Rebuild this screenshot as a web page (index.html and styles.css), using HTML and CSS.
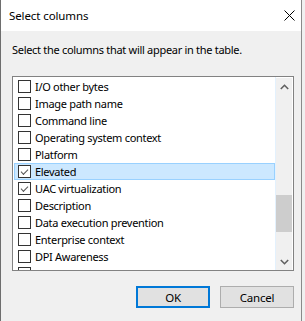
FILE: index.html
```html
<!DOCTYPE html>
<html lang="en">
<head>
    <meta charset="UTF-8">
    <title>Select columns</title>
    <link rel="stylesheet" href="styles.css">
</head>
<body>
    <div class="window">
        <div class="titlebar">
            <span class="title">Select columns</span>
            <svg class="close" width="11" height="11" viewBox="0 0 11 11">
                <path d="M0.5 0.5L10.5 10.5M10.5 0.5L0.5 10.5" stroke="#000" stroke-width="1" fill="none"/>
            </svg>
        </div>
        <div class="content">
            <p class="prompt">Select the columns that will appear in the table.</p>
            <div class="list">
                <ul class="items">
                    <li class="item"><span class="check"></span>I/O other bytes</li>
                    <li class="item"><span class="check"></span>Image path name</li>
                    <li class="item"><span class="check"></span>Command line</li>
                    <li class="item"><span class="check"></span>Operating system context</li>
                    <li class="item"><span class="check"></span>Platform</li>
                    <li class="item selected"><span class="check checked"></span>Elevated</li>
                    <li class="item"><span class="check checked"></span>UAC virtualization</li>
                    <li class="item"><span class="check"></span>Description</li>
                    <li class="item"><span class="check"></span>Data execution prevention</li>
                    <li class="item"><span class="check"></span>Enterprise context</li>
                    <li class="item"><span class="check"></span>DPI Awareness</li>
                    <li class="item"><span class="check"></span></li>
                </ul>
                <div class="scrollbar">
                    <span class="arrow">
                        <svg width="9" height="6" viewBox="0 0 9 6"><path d="M0.8 5L4.5 1.3L8.2 5" stroke="#606060" stroke-width="1.6" fill="none"/></svg>
                    </span>
                    <div class="track"><div class="thumb"></div></div>
                    <span class="arrow">
                        <svg width="9" height="6" viewBox="0 0 9 6"><path d="M0.8 1L4.5 4.7L8.2 1" stroke="#606060" stroke-width="1.6" fill="none"/></svg>
                    </span>
                </div>
            </div>
            <div class="buttons">
                <button class="btn btn-default">OK</button>
                <button class="btn">Cancel</button>
            </div>
        </div>
    </div>
</body>
</html>
```

FILE: styles.css
```css
body {
    margin: 0;
    background: #f0f0f0;
    font-family: 'Noto Sans', 'Open Sans', sans-serif;
    font-size: 11px;
    letter-spacing: -0.3px;
    color: #000;
}
.window {
    width: 302px;
    height: 321px;
    box-sizing: border-box;
    border-left: 1px solid #6e6e6e;
    border-right: 1px solid #8a8a8a;
    background: #f0f0f0;
    overflow: hidden;
}
.titlebar {
    height: 31px;
    background: #fff;
    display: flex;
    align-items: center;
    justify-content: space-between;
    padding: 0 6px 0 8px;
}
.title {
    font-size: 11.5px;
    letter-spacing: -0.1px;
    line-height: 17px;
    margin-top: -1px;
}
.close {
    display: block;
}
.content {
    padding: 0 7px 0 11px;
}
.prompt {
    margin: 10px 0 0 0;
    line-height: 17px;
}
.list {
    margin-top: 18px;
    height: 195px;
    box-sizing: border-box;
    border: 1px solid #828282;
    background: #fff;
    display: flex;
}
.items {
    list-style: none;
    margin: 0;
    padding: 1px 0 0 1px;
    width: 263px;
    box-sizing: border-box;
    border-right: 1px solid #e3f1fd;
    overflow: hidden;
}
.item {
    height: 17px;
    line-height: 17px;
    display: flex;
    align-items: center;
    padding-left: 4px;
    white-space: nowrap;
    box-sizing: border-box;
}
.item.selected {
    background: #cce8ff;
    border: 1px solid #99d1ff;
    padding-left: 3px;
}
.check {
    width: 13px;
    height: 13px;
    box-sizing: border-box;
    border: 1px solid #333;
    background: #fff;
    margin-right: 4px;
    flex: none;
    position: relative;
}
.check.checked::after {
    content: "";
    position: absolute;
    left: 1px;
    top: 1px;
    width: 6px;
    height: 3px;
    border-left: 1px solid #555;
    border-bottom: 1px solid #555;
    transform: translate(1px, 2px) rotate(-45deg);
}
.scrollbar {
    width: 16px;
    margin: 1px 1px 0 0;
    background: #f0f0f0;
    display: flex;
    flex-direction: column;
}
.arrow {
    height: 17px;
    display: flex;
    align-items: center;
    justify-content: center;
    flex: none;
}
.arrow svg {
    display: block;
}
.track {
    flex: 1;
}
.thumb {
    margin-top: 100px;
    height: 37px;
    background: #cdcdcd;
}
.buttons {
    display: flex;
    justify-content: flex-end;
    gap: 10px;
    margin-top: 15px;
}
.btn {
    width: 74px;
    height: 22px;
    box-sizing: border-box;
    background: #e1e1e1;
    border: 1px solid #adadad;
    font-family: inherit;
    font-size: 11.5px;
    letter-spacing: -0.2px;
    color: #000;
    padding: 0;
    margin: 0;
}
.btn-default {
    border: 2px solid #0078d7;
}
```
